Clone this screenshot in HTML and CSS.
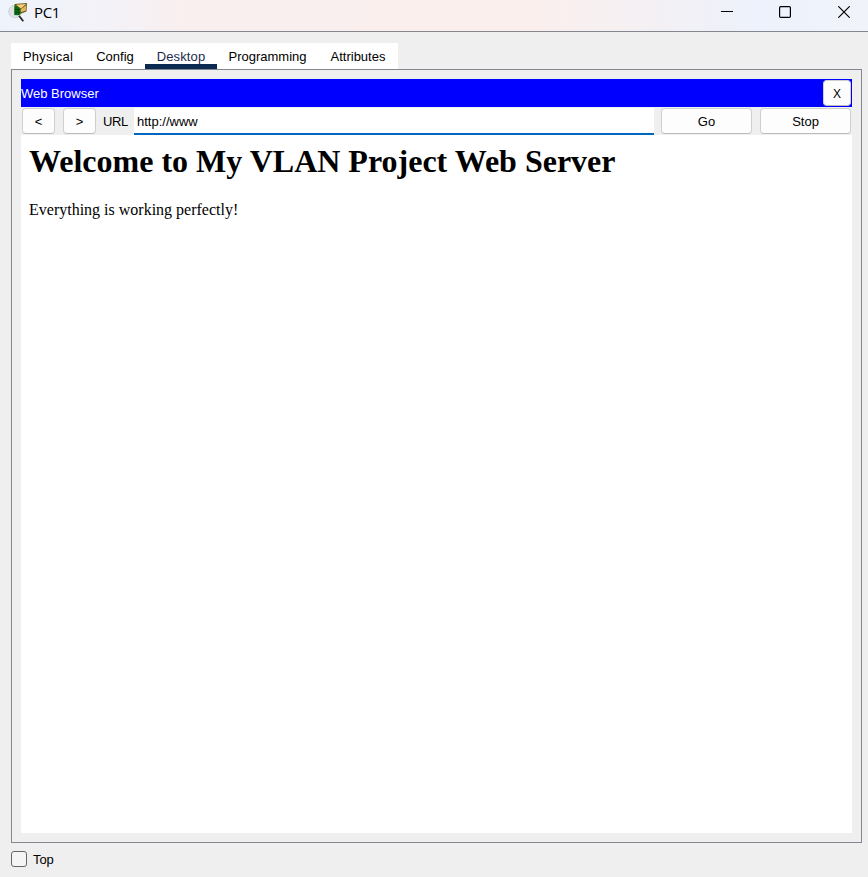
FILE: index.html
```html
<!DOCTYPE html>
<html lang="en">
<head>
<meta charset="utf-8">
<title>PC1</title>
<link rel="stylesheet" href="styles.css">
</head>
<body>
<div class="window">
  <header class="titlebar">
    <svg class="app-icon" width="20" height="22" viewBox="0 0 20 22">
      <circle cx="7" cy="9.500" r="6.300" fill="#e0e3e4" stroke="#c9cccf" stroke-width=".8"/>
      <path d="M6.500 2 19 1 18.500 9.500 12 12 6.500 10Z" fill="#6e5520"/>
      <path d="M8 2.800 18 2 13 6.500Z" fill="#f5d27b"/>
      <path d="M12.500 7.500 18.200 3.300 17.700 8.800 12.500 10.300Z" fill="#e3b75c"/>
      <path d="M6.500 4 8 3.500 12.500 7 12.500 12.500 10 13.300 6.200 13Z" fill="#0b7a1c"/>
      <path d="M8 4.500V13M10.300 5.500V13M6.500 7.500H12M6.500 10.300H12" stroke="#023c08" stroke-width=".7"/>
      <path d="M11 13.700 15.300 19.300" stroke="#25282b" stroke-width="1.800"/>
    </svg>
    <span class="title">PC1</span>
    <div class="controls">
      <svg width="12" height="12" viewBox="0 0 12 12"><path d="M0 5.500H12" stroke="#000"/></svg>
      <svg width="12" height="12" viewBox="0 0 12 12"><rect x=".6" y=".6" width="10.800" height="10.800" rx="1.200" fill="none" stroke="#000" stroke-width="1.200"/></svg>
      <svg width="12" height="12" viewBox="0 0 12 12"><path d="M.3.300 11.700 11.700M11.700.300.300 11.700" stroke="#000" stroke-width="1.200"/></svg>
    </div>
  </header>
  <nav class="tabs">
    <span class="tab physical">Physical</span><span class="tab config">Config</span><span class="tab desktop active">Desktop</span><span class="tab programming">Programming</span><span class="tab attributes">Attributes</span>
  </nav>
  <main class="panel">
    <div class="browser-title"><span>Web Browser</span><button class="btn close">X</button></div>
    <div class="toolbar">
      <button class="btn nav">&lt;</button>
      <button class="btn nav">&gt;</button>
      <span class="url-label">URL</span>
      <div class="url">http://www</div>
      <button class="btn wide go">Go</button>
      <button class="btn wide">Stop</button>
    </div>
    <article class="page">
      <h1>Welcome to My VLAN Project Web Server</h1>
      <p>Everything is working perfectly!</p>
    </article>
  </main>
  <footer class="footer"><span class="checkbox"></span><span class="top-label">Top</span></footer>
</div>
</body>
</html>
```
FILE: styles.css
```css
* { box-sizing: border-box; }
body { margin: 0; }
.window {
  width: 868px; height: 877px; overflow: hidden;
  display: flex; flex-direction: column;
  background: #efefef; color: #000;
  font: 13px/16px "Liberation Sans", Arial, sans-serif;
}
.titlebar {
  height: 32px; flex: none; display: flex; align-items: flex-start;
  padding: 2px 18px 0 8px; border-bottom: 1px solid #84878f;
  background: linear-gradient(90deg, #eef3fb 0, #f3f2f8 12%, #f9efee 22%, #faefed 62%, #f4f0f3 74%, #edf2fc 88%, #f0f3f9 100%);
}
.title { margin: 1px 0 0 6px; font: 15px/18px "Open Sans", "Noto Sans", sans-serif; letter-spacing: -.3px; }
.controls { margin: 4px 0 0 auto; display: flex; gap: 46px; }
.controls svg { display: block; }
.controls svg:last-child { margin-left: 1px; }
.tabs { display: flex; width: 387px; height: 26px; flex: none; margin: 11px 0 0 11px; background: #fff; }
.tab { padding-top: 6px; text-align: center; height: 26px; }
.physical { width: 74px; letter-spacing: .2px; }
.config { width: 60px; }
.desktop { width: 72px; letter-spacing: .15px; }
.programming { width: 101px; }
.attributes { width: 80px; }
.active { color: #1c2b4b; border-bottom: 5px solid #0c2a4f; }
.panel {
  width: 851px; height: 774px; flex: none; margin-left: 11px; padding: 9px;
  border: 1px solid #84878f; display: flex; flex-direction: column;
}
.browser-title {
  height: 28px; flex: none; display: flex; align-items: center; justify-content: space-between;
  padding-right: 1px; background: #00f; color: #fff;
}
.browser-title span { padding-top: 2px; }
.btn {
  height: 26px; padding: 2px 0 0; border: 1px solid #d0d0d0; border-bottom-color: #bcbcbc;
  border-radius: 4px; background: #fdfdfd; color: #000; font: inherit;
}
.close { width: 28px; font-size: 12px; }
.toolbar { height: 28px; flex: none; display: flex; align-items: center; padding: 0 1px; }
.nav { width: 33px; margin-right: 8px; }
.url-label { width: 30px; margin-left: -1px; padding-top: 2px; letter-spacing: -.4px; }
.url {
  width: 520px; height: 27px; margin: 1px 7px 0 1px; padding: 6px 3px 0;
  background: #fff; border-bottom: 2px solid #0067c0;
}
.wide { width: 91px; }
.go { margin-right: 8px; }
.page { flex: 1; background: #fff; padding: 8px; font-family: "Liberation Serif", "Times New Roman", serif; }
h1 { margin: 0; font-size: 32px; line-height: 37px; }
p { margin: 21px 0 0; font-size: 16px; line-height: 18px; }
.footer { display: flex; align-items: center; margin: 8px 0 0 11px; height: 16px; }
.checkbox { width: 16px; height: 16px; border: 1px solid #666; border-radius: 3px; background: #f5f5f5; margin-right: 6px; }
.top-label { padding-top: 2px; letter-spacing: -.1px; }
```
